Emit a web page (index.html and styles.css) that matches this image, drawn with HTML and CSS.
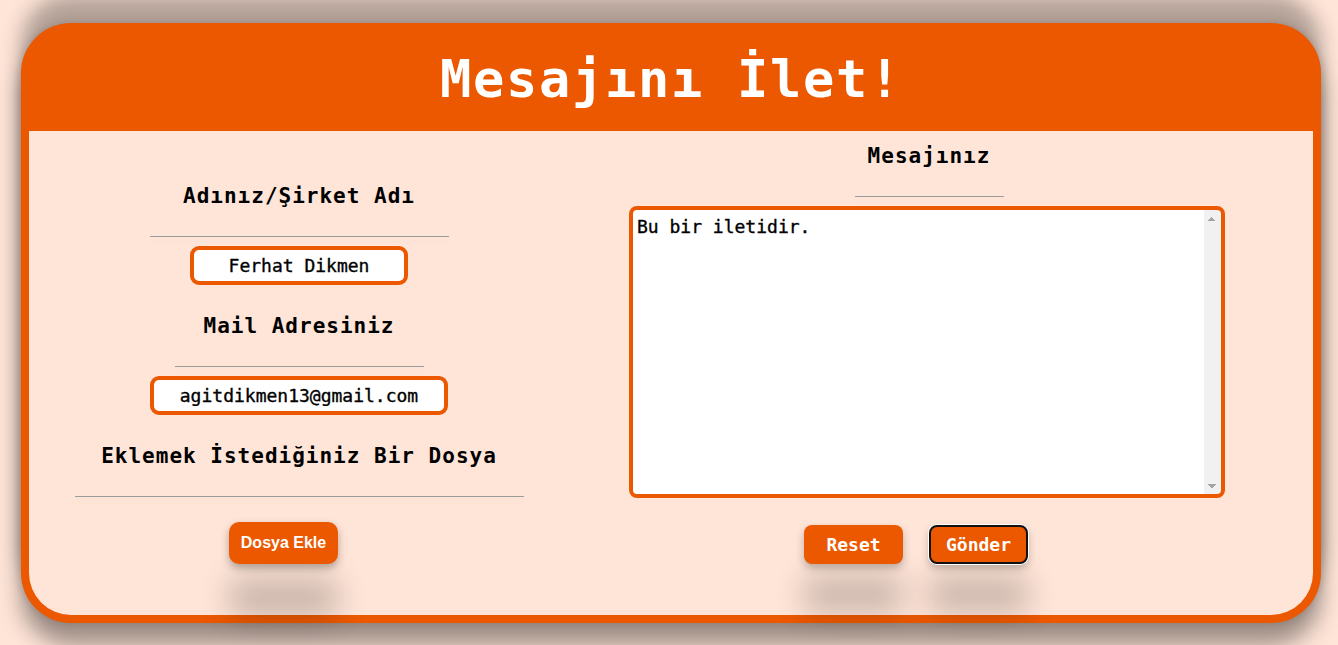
FILE: index.html
```html
<!DOCTYPE html>
<html lang="tr">
<head>
<meta charset="utf-8">
<title>Mesajını İlet!</title>
<link rel="stylesheet" href="styles.css">
</head>
<body>
<div class="card">
  <header class="card-head">
    <h1 class="title">Mesajını İlet!</h1>
  </header>
  <div class="card-body">
    <div class="col col-left">
      <h3 class="label">Adınız/Şirket Adı</h3>
      <div class="rule rule-name"></div>
      <input class="field field-name" type="text" value="Ferhat Dikmen">
      <h3 class="label label-gap">Mail Adresiniz</h3>
      <div class="rule rule-mail"></div>
      <input class="field field-mail" type="text" value="agitdikmen13@gmail.com">
      <h3 class="label label-gap">Eklemek İstediğiniz Bir Dosya</h3>
      <div class="rule rule-file"></div>
      <button class="btn-file" type="button">Dosya Ekle</button>
    </div>
    <div class="col col-right">
      <h3 class="label">Mesajınız</h3>
      <div class="rule rule-msg"></div>
      <textarea class="message">Bu bir iletidir.</textarea>
      <div class="actions">
        <button class="btn btn-reset" type="button">Reset</button>
        <button class="btn btn-send" type="button">Gönder</button>
      </div>
    </div>
  </div>
</div>
</body>
</html>
```
FILE: styles.css
```css
html, body {
  margin: 0;
  padding: 0;
}
body {
  background: #ffe5d8;
  padding-top: 23px;
  height: 622px;
  overflow: hidden;
  font-family: "DejaVu Sans Mono", monospace;
}
.card {
  width: 1300px;
  height: 600px;
  margin-left: 21px;
  box-sizing: border-box;
  background: #eb5800;
  border-radius: 50px;
  padding: 0 8px 8px;
  display: flex;
  flex-direction: column;
  box-shadow: 0 -28px 20px rgba(0,0,0,.3), 0 22px 22px rgba(0,0,0,.38), 0 0 8px rgba(0,0,0,.15);
}
.card-head {
  height: 108px;
  display: flex;
  align-items: center;
  justify-content: center;
  padding-top: 3px;
  box-sizing: border-box;
}
.title {
  margin: 0;
  color: #fff;
  font-size: 52px;
  font-weight: bold;
  letter-spacing: 1.7px;
  line-height: 60px;
}
.card-body {
  flex: 1;
  background: #ffe5d8;
  border-radius: 0 0 42px 42px;
  display: grid;
  grid-template-columns: 540px 720px;
  align-items: start;
}
.col {
  display: flex;
  flex-direction: column;
  align-items: center;
}
.col-left {
  padding-top: 53px;
}
.col-right {
  padding-top: 13px;
}
.label {
  margin: 0;
  font-size: 21px;
  line-height: 24px;
  font-weight: bold;
  letter-spacing: 1px;
  color: #000;
}
.label-gap {
  margin-top: 29px;
}
.rule {
  height: 1px;
  margin-top: 28px;
  background: #9c9c9c;
  box-shadow: 0 4px 8px rgba(0,0,0,.07);
}
.rule-name { width: 299px; }
.rule-mail { width: 249px; }
.rule-file { width: 449px; }
.rule-msg { width: 149px; }
.field {
  margin-top: 9px;
  height: 39px;
  box-sizing: border-box;
  border: 4px solid #eb5800;
  border-radius: 9px;
  background: #fff;
  font-family: "DejaVu Sans Mono", monospace;
  font-size: 18px;
  color: #000;
  -webkit-text-stroke: 0.35px #000;
  text-align: center;
  padding: 0;
  outline: none;
}
.field-name { width: 218px; }
.field-mail { width: 298px; }
.btn-file {
  margin-top: 25px;
  margin-right: 31px;
  width: 109px;
  height: 42px;
  border: none;
  border-radius: 10px;
  background: #eb5800;
  color: #fff;
  font-family: "Liberation Sans", Arial, sans-serif;
  font-weight: bold;
  font-size: 16px;
  padding: 0;
  box-shadow: 0 4px 8px rgba(0,0,0,.3), 0 55px 30px rgba(0,0,0,.2);
}
.message {
  margin-top: 9px;
  margin-right: 4px;
  width: 596px;
  height: 292px;
  box-sizing: border-box;
  border: 4px solid #eb5800;
  border-radius: 8px;
  background-color: #fff;
  background-image:
    linear-gradient(to bottom right, transparent 50%, #a3a3a3 50%),
    linear-gradient(to bottom left, transparent 50%, #a3a3a3 50%),
    linear-gradient(to top right, transparent 50%, #a3a3a3 50%),
    linear-gradient(to top left, transparent 50%, #a3a3a3 50%),
    linear-gradient(to left, #f1f1f1 17px, #fff 17px);
  background-size: 4px 4px, 4px 4px, 4px 4px, 4px 4px, 100% 100%;
  background-position:
    right 9px top 7px,
    right 5px top 7px,
    right 9px bottom 6px,
    right 5px bottom 6px,
    0 0;
  background-repeat: no-repeat;
  resize: none;
  overflow: hidden;
  padding: 6px 21px 6px 4px;
  font-family: "DejaVu Sans Mono", monospace;
  font-size: 18px;
  line-height: 21px;
  color: #000;
  -webkit-text-stroke: 0.35px #000;
  outline: none;
}
.actions {
  margin-top: 27px;
  margin-right: 26px;
  display: flex;
  gap: 26px;
}
.btn {
  width: 99px;
  height: 39px;
  box-sizing: border-box;
  border: none;
  border-radius: 8px;
  background: #eb5800;
  color: #fff;
  font-family: "DejaVu Sans Mono", monospace;
  font-weight: bold;
  font-size: 18px;
  padding: 0;
  box-shadow: 0 4px 8px rgba(0,0,0,.25), 0 50px 30px rgba(0,0,0,.2);
}
.btn-send {
  border: 2px solid #111;
  box-shadow: 0 0 0 1px #fff, 0 4px 8px rgba(0,0,0,.25), 0 50px 30px rgba(0,0,0,.2);
}
```
